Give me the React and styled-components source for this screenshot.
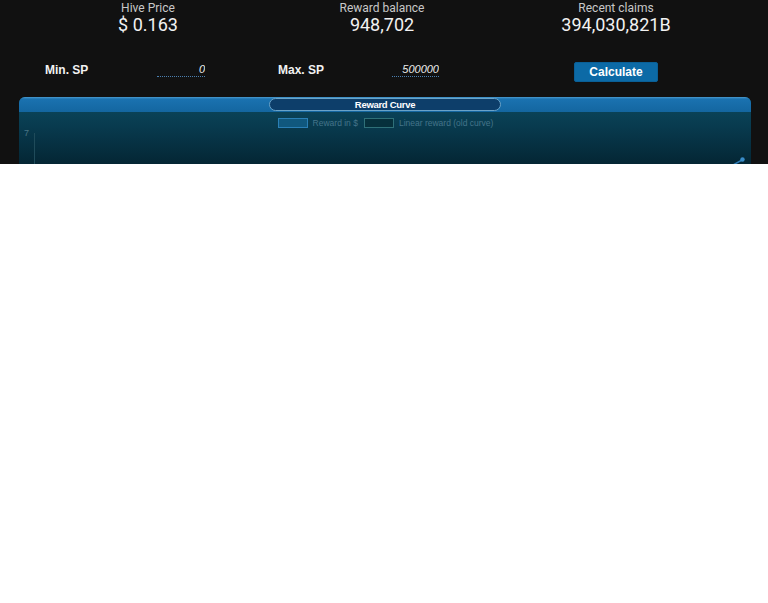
import React from "react";
import styled, { createGlobalStyle } from "styled-components";

const Global = createGlobalStyle`
  html, body { margin: 0; padding: 0; background: #ffffff; }
  body { font-family: Roboto, "Liberation Sans", Arial, sans-serif; }
  * { box-sizing: border-box; }
`;

const Page = styled.div`
  background: #111111;
  height: 164px;
  overflow: hidden;
`;

const Grid = styled.div`
  display: grid;
  grid-template-columns: repeat(3, 234px);
  padding-left: 31px;
`;

const Stat = styled.div`
  display: flex;
  flex-direction: column;
  align-items: center;
  padding-top: 1px;
  height: 55px;
`;

const StatLabel = styled.div`
  font-size: 12px;
  line-height: 14px;
  color: #c8c8c8;
`;

const StatValue = styled.div`
  font-size: 18px;
  line-height: 19px;
  color: #f2f2f2;
`;

const Field = styled.div`
  display: flex;
  align-items: center;
  justify-content: ${(p) => (p.$center ? "center" : "space-between")};
  padding: 0 60px 0 ${(p) => (p.$pl ?? 14)}px;
  height: 30px;
`;

const FieldLabel = styled.span`
  font-family: "Liberation Sans", Arial, sans-serif;
  font-weight: bold;
  font-size: 12px;
  color: #f2f2f2;
`;

const Input = styled.input`
  width: ${(p) => p.$w}px;
  background: transparent;
  border: none;
  border-bottom: 1px dotted #4a7fb0;
  color: #ececec;
  font-family: "Liberation Sans", Arial, sans-serif;
  font-style: italic;
  font-size: 11px;
  text-align: right;
  padding: 0 0 1px 0;
  outline: none;
`;

const Button = styled.button`
  width: 84px;
  height: 20px;
  margin-left: 60px;
  margin-top: 4px;
  background: #0c6aa6;
  border: 1px solid #0a5f96;
  border-radius: 2px;
  color: #ffffff;
  font-family: "Liberation Sans", Arial, sans-serif;
  font-weight: bold;
  font-size: 12px;
  cursor: pointer;
`;

const Panel = styled.div`
  margin: 12px 17px 0 19px;
  border-radius: 6px 6px 0 0;
  overflow: hidden;
  height: 300px;
  background: linear-gradient(#0c4a60 0px, #083a4e 30px, #042634 67px);
`;

const PanelHeader = styled.div`
  height: 15px;
  background: linear-gradient(#4b9bd0 0px, #1a72b0 2px, #1466a0 15px);
  display: flex;
  justify-content: center;
  align-items: center;
`;

const TitlePill = styled.div`
  width: 232px;
  height: 13px;
  border: 1px solid #6aa3c8;
  border-radius: 7px;
  background: #0d3e6a;
  display: flex;
  align-items: center;
  justify-content: center;
  color: #ffffff;
  font-family: "Liberation Sans", Arial, sans-serif;
  font-weight: bold;
  font-size: 9.5px;
  letter-spacing: -0.3px;
`;

const Legend = styled.div`
  display: flex;
  justify-content: center;
  align-items: center;
  gap: 5px;
  padding-top: 6px;
  margin-left: 2px;
`;

const Swatch = styled.span`
  width: 30px;
  height: 10px;
  border: 1px solid ${(p) => p.$border};
  background: ${(p) => p.$fill};
`;

const LegendText = styled.span`
  font-family: "Liberation Sans", Arial, sans-serif;
  font-size: 8.5px;
  color: #44748a;
  margin-right: 1px;
`;

const ChartArea = styled.div`
  position: relative;
  height: 60px;
`;

const AxisTick = styled.span`
  position: absolute;
  left: 5px;
  top: 0px;
  font-family: "Liberation Sans", Arial, sans-serif;
  font-size: 9px;
  color: #4a7585;
`;

const AxisLine = styled.div`
  position: absolute;
  left: 15px;
  top: 5px;
  width: 1px;
  height: 40px;
  background: #1f4b5a;
`;

const Point = styled.svg`
  position: absolute;
  right: 5px;
  top: 28px;
`;

export default function App() {
  return (
    <>
      <Global />
      <Page>
        <Grid>
          <Stat>
            <StatLabel>Hive Price</StatLabel>
            <StatValue>$ 0.163</StatValue>
          </Stat>
          <Stat>
            <StatLabel>Reward balance</StatLabel>
            <StatValue>948,702</StatValue>
          </Stat>
          <Stat>
            <StatLabel>Recent claims</StatLabel>
            <StatValue>394,030,821B</StatValue>
          </Stat>
          <Field>
            <FieldLabel>Min. SP</FieldLabel>
            <Input $w={48} defaultValue="0" />
          </Field>
          <Field $pl={13}>
            <FieldLabel>Max. SP</FieldLabel>
            <Input $w={47} defaultValue="500000" />
          </Field>
          <Field $center $pl={0}>
            <Button>Calculate</Button>
          </Field>
        </Grid>
        <Panel>
          <PanelHeader>
            <TitlePill>Reward Curve</TitlePill>
          </PanelHeader>
          <Legend>
            <Swatch $border="#2a7fb5" $fill="#10587e" />
            <LegendText>Reward in $</LegendText>
            <Swatch $border="#2f7078" $fill="#06303c" />
            <LegendText>Linear reward (old curve)</LegendText>
          </Legend>
          <ChartArea>
            <AxisTick>7</AxisTick>
            <AxisLine />
            <Point width="14" height="10" viewBox="0 0 14 10">
              <line x1="1" y1="9" x2="10" y2="4" stroke="#2f7db8" strokeWidth="1.5" />
              <circle cx="10.5" cy="3.5" r="2.2" fill="#3a8cc8" />
            </Point>
          </ChartArea>
        </Panel>
      </Page>
    </>
  );
}
